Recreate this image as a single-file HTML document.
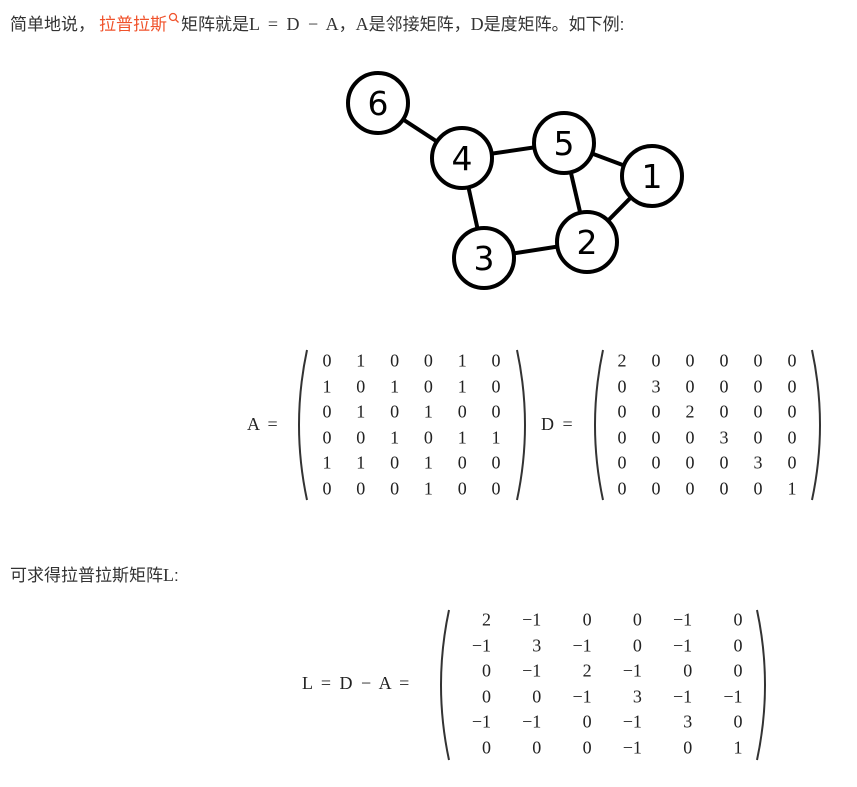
<!DOCTYPE html>
<html><head><meta charset="utf-8"><style>
body{margin:0;width:857px;height:787px;background:#fff;position:relative;font-family:"Liberation Sans","Noto Sans CJK SC",sans-serif;color:#333;}
.t{position:absolute;font-size:17px;white-space:nowrap}
.s{font-family:"Liberation Serif",serif;font-size:18px;word-spacing:4px}
.m{position:absolute;font-family:"Liberation Serif",serif;font-size:18px;color:#222;white-space:nowrap;word-spacing:4px}
.c{position:absolute;font-family:"Liberation Serif",serif;font-size:18px;color:#222;transform:translate(-50%,-50%)}
.r{position:absolute;font-family:"Liberation Serif",serif;font-size:18px;color:#222;transform:translate(-100%,-50%)}
</style></head><body>
<div class="t" style="left:10px;top:10px">简单地说，<span style="color:#f0522b;margin-left:4px">拉普拉斯</span><svg width="14" height="12" style="vertical-align:top;margin-top:2px"><circle cx="6" cy="5" r="3.5" fill="none" stroke="#f0522b" stroke-width="1.3"/><line x1="8.5" y1="7.5" x2="11.5" y2="10.5" stroke="#f0522b" stroke-width="1.3"/></svg>矩阵就是<span class="s">L = D − A</span>，<span class="s">A</span>是邻接矩阵，<span class="s">D</span>是度矩阵。如下例:</div>
<svg style="position:absolute;left:0;top:0" width="857" height="320">
<g stroke="#000" stroke-width="4">
<line x1="378" y1="103" x2="462" y2="158"/><line x1="462" y1="158" x2="564" y2="143"/><line x1="564" y1="143" x2="652" y2="176"/><line x1="564" y1="143" x2="587" y2="242"/><line x1="652" y1="176" x2="587" y2="242"/><line x1="587" y1="242" x2="484" y2="258"/><line x1="484" y1="258" x2="462" y2="158"/>
</g>
<g stroke="#000" stroke-width="4" fill="#fff">
<circle cx="378" cy="103" r="30"/><circle cx="462" cy="158" r="30"/><circle cx="564" cy="143" r="30"/><circle cx="652" cy="176" r="30"/><circle cx="587" cy="242" r="30"/><circle cx="484" cy="258" r="30"/>
</g>
<g font-family="DejaVu Sans,sans-serif" font-size="33" text-anchor="middle" fill="#000">
<text x="378" y="115">6</text><text x="462" y="170">4</text><text x="564" y="155">5</text><text x="652" y="188">1</text><text x="587" y="254">2</text><text x="484" y="270">3</text>
</g>
</svg>
<svg style="position:absolute;left:0;top:330" width="857" height="457" fill="none" stroke="#333" stroke-width="2">
<path d="M307 20 Q291 95 307 170"/><path d="M517 20 Q533 95 517 170"/>
<path d="M603 20 Q587 95 603 170"/><path d="M812 20 Q828 95 812 170"/>
<path d="M449 280 Q433 355 449 430"/><path d="M757 280 Q773 355 757 430"/>
</svg>
<div class="m" style="left:247px;top:414px">A =</div>
<div class="m" style="left:541px;top:414px">D =</div>
<div class="m" style="left:302px;top:673px">L = D − A =</div>
<div class="t" style="left:10px;top:561px">可求得拉普拉斯矩阵<span class="s">L</span>:</div>
<div id="g"></div>
<script>
var A=[[0,1,0,0,1,0],[1,0,1,0,1,0],[0,1,0,1,0,0],[0,0,1,0,1,1],[1,1,0,1,0,0],[0,0,0,1,0,0]];
var D=[[2,0,0,0,0,0],[0,3,0,0,0,0],[0,0,2,0,0,0],[0,0,0,3,0,0],[0,0,0,0,3,0],[0,0,0,0,0,1]];
var L=[[2,-1,0,0,-1,0],[-1,3,-1,0,-1,0],[0,-1,2,-1,0,0],[0,0,-1,3,-1,-1],[-1,-1,0,-1,3,0],[0,0,0,-1,0,1]];
var h='';
for(var i=0;i<6;i++)for(var j=0;j<6;j++){
var y=361+i*25.6;
h+='<div class="c" style="left:'+(327+j*33.8)+'px;top:'+y+'px">'+A[i][j]+'</div>';
h+='<div class="c" style="left:'+(622+j*34)+'px;top:'+y+'px">'+D[i][j]+'</div>';
var v=L[i][j];
h+='<div class="r" style="left:'+(491+j*50.3)+'px;top:'+(620+i*25.6)+'px">'+(v<0?'−'+(-v):v)+'</div>';
}
document.getElementById('g').innerHTML=h;
</script>
</body></html>
